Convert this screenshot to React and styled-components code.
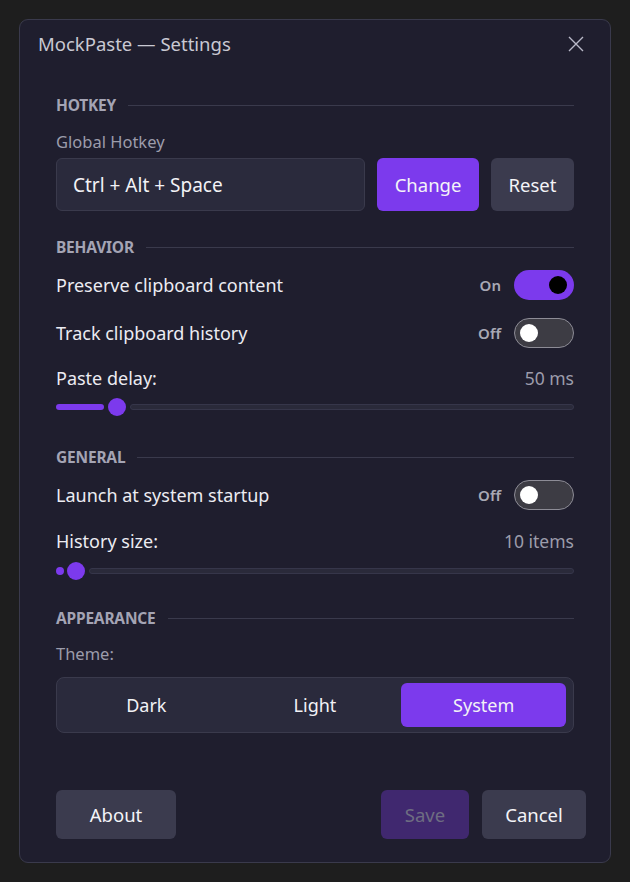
import React, { useState } from "react";
import styled, { createGlobalStyle } from "styled-components";

const Global = createGlobalStyle`
  html, body { margin: 0; padding: 0; background: #1e1e1e; }
  body { font-family: "Noto Sans", "Open Sans", sans-serif; color: #ececf2; }
  * { box-sizing: border-box; }
`;

const accent = "#7c3aed";

const Page = styled.div`
  width: 630px;
  height: 882px;
  padding: 19px;
`;

const Dialog = styled.div`
  height: 844px;
  background: #1f1e2e;
  border: 1px solid #3a3a4c;
  border-radius: 9px;
  display: flex;
  flex-direction: column;
`;

const TitleBar = styled.div`
  height: 47px;
  display: flex;
  align-items: center;
  justify-content: space-between;
  padding: 0 24px 0 18px;
`;

const Title = styled.div`
  font-size: 18.5px;
  color: #c9c9d3;
`;

const CloseButton = styled.button`
  width: 20px;
  height: 20px;
  padding: 0;
  border: 0;
  background: transparent;
  display: grid;
  place-items: center;
  cursor: pointer;
`;

const Body = styled.div`
  padding: 28px 36px 0 36px;
  display: flex;
  flex-direction: column;
`;

const SectionHeader = styled.div`
  display: flex;
  align-items: center;
  gap: 12px;
  height: 20px;
  margin-top: ${(p) => p.$mt || 0}px;
  font-size: 15.5px;
  font-weight: 700;
  letter-spacing: -0.2px;
  color: #a4a4b4;
  &::after {
    content: "";
    flex: 1;
    height: 1px;
    background: #3a3a4c;
  }
`;

const Caption = styled.div`
  height: 22px;
  line-height: 22px;
  margin-top: ${(p) => p.$mt || 0}px;
  font-size: 16.5px;
  color: #9c9cab;
`;

const HotkeyRow = styled.div`
  display: flex;
  gap: 12px;
  height: 53px;
  margin-top: 5px;
`;

const HotkeyField = styled.div`
  flex: 1;
  display: flex;
  align-items: center;
  padding: 0 16px;
  background: #2a2a3c;
  border: 1px solid #3a3a4c;
  border-radius: 6px;
  font-size: 19px;
  color: #f2f2f6;
`;

const Button = styled.button`
  height: ${(p) => p.$h || 53}px;
  padding: 0;
  width: ${(p) => p.$w}px;
  border: 0;
  border-radius: 6px;
  font-family: inherit;
  font-size: 18.5px;
  cursor: pointer;
  background: ${(p) =>
    p.$variant === "primary" ? accent : p.$variant === "disabled" ? "#40286f" : "#3b3b4e"};
  color: ${(p) => (p.$variant === "disabled" ? "#6e6d82" : "#f4f4f8")};
`;

const ToggleRow = styled.div`
  display: flex;
  align-items: center;
  justify-content: space-between;
  height: 32px;
  margin-top: ${(p) => p.$mt || 0}px;
`;

const RowLabel = styled.div`
  font-size: 18px;
  color: #ececf2;
`;

const ToggleGroup = styled.div`
  display: flex;
  align-items: center;
  gap: 13px;
`;

const ToggleState = styled.span`
  font-size: 15px;
  font-weight: 600;
  color: #a8a8b4;
`;

const Track = styled.button`
  position: relative;
  width: 60px;
  height: 30px;
  padding: 0;
  border-radius: 15px;
  cursor: pointer;
  background: ${(p) => (p.$on ? accent : "#3d3c44")};
  border: ${(p) => (p.$on ? "none" : "1.5px solid #8d8c96")};
`;

const Knob = styled.span`
  position: absolute;
  top: 50%;
  width: 18px;
  height: 18px;
  margin-top: -9px;
  border-radius: 50%;
  background: ${(p) => (p.$on ? "#000" : "#fff")};
  ${(p) => (p.$on ? "right: 7px;" : "left: 5px;")}
`;

const ValueRow = styled.div`
  display: flex;
  justify-content: space-between;
  align-items: center;
  height: 22px;
  margin-top: ${(p) => p.$mt || 0}px;
`;

const ValueText = styled.span`
  font-size: 17.5px;
  color: #9c9cab;
`;

const SliderBox = styled.div`
  display: flex;
  align-items: center;
  height: 18px;
  margin-top: ${(p) => p.$mt || 0}px;
`;

const SliderFill = styled.div`
  height: ${(p) => (p.$dot ? 8 : 6)}px;
  border-radius: 4px;
  background: ${accent};
  flex: none;
`;

const SliderThumb = styled.div`
  width: 18px;
  height: 18px;
  border-radius: 50%;
  background: ${accent};
  margin: 0 4px 0 ${(p) => (p.$tight ? 3 : 4)}px;
  flex: none;
`;

const SliderRest = styled.div`
  flex: 1;
  height: 6px;
  border-radius: 3px;
  background: #2a2a3a;
  border: 1px solid #36364a;
`;

const Segmented = styled.div`
  display: grid;
  grid-template-columns: repeat(3, 1fr);
  gap: 4px;
  height: 56px;
  margin-top: 12px;
  padding: 5px 7px;
  background: #2a2a3c;
  border: 1px solid #3a3a4c;
  border-radius: 8px;
`;

const Segment = styled.button`
  border: 0;
  border-radius: 6px;
  font-family: inherit;
  font-size: 18px;
  color: #f2f2f6;
  cursor: pointer;
  background: ${(p) => (p.$active ? accent : "transparent")};
`;

const Footer = styled.div`
  margin-top: auto;
  padding: 0 24px 23px 36px;
  display: flex;
  align-items: center;
`;

const Spacer = styled.div`
  flex: 1;
`;

const FooterGap = styled.div`
  width: 13px;
`;

function Toggle({ on, onChange }) {
  return (
    <ToggleGroup>
      <ToggleState>{on ? "On" : "Off"}</ToggleState>
      <Track $on={on} onClick={() => onChange(!on)} aria-pressed={on}>
        <Knob $on={on} />
      </Track>
    </ToggleGroup>
  );
}

function Slider({ fill, dot, mt }) {
  return (
    <SliderBox $mt={mt}>
      <SliderFill $dot={dot} style={{ width: fill }} />
      <SliderThumb $tight={dot} />
      <SliderRest />
    </SliderBox>
  );
}

export default function App() {
  const [preserve, setPreserve] = useState(true);
  const [track, setTrack] = useState(false);
  const [launch, setLaunch] = useState(false);
  const [theme, setTheme] = useState("System");

  return (
    <Page>
      <Global />
      <Dialog>
        <TitleBar>
          <Title>MockPaste — Settings</Title>
          <CloseButton aria-label="Close">
            <svg width="16" height="16" viewBox="0 0 16 16">
              <path d="M1 1L15 15M15 1L1 15" stroke="#b9b9c8" strokeWidth="1.4" />
            </svg>
          </CloseButton>
        </TitleBar>

        <Body>
          <SectionHeader>HOTKEY</SectionHeader>
          <Caption $mt={16}>Global Hotkey</Caption>
          <HotkeyRow>
            <HotkeyField>Ctrl + Alt + Space</HotkeyField>
            <Button $variant="primary" $w={102}>Change</Button>
            <Button $w={83}>Reset</Button>
          </HotkeyRow>

          <SectionHeader $mt={26}>BEHAVIOR</SectionHeader>
          <ToggleRow $mt={12}>
            <RowLabel>Preserve clipboard content</RowLabel>
            <Toggle on={preserve} onChange={setPreserve} />
          </ToggleRow>
          <ToggleRow $mt={16}>
            <RowLabel>Track clipboard history</RowLabel>
            <Toggle on={track} onChange={setTrack} />
          </ToggleRow>
          <ValueRow $mt={18}>
            <RowLabel>Paste delay:</RowLabel>
            <ValueText>50 ms</ValueText>
          </ValueRow>
          <Slider fill={48} mt={9} />

          <SectionHeader $mt={31}>GENERAL</SectionHeader>
          <ToggleRow $mt={12}>
            <RowLabel>Launch at system startup</RowLabel>
            <Toggle on={launch} onChange={setLaunch} />
          </ToggleRow>
          <ValueRow $mt={19}>
            <RowLabel>History size:</RowLabel>
            <ValueText>10 items</ValueText>
          </ValueRow>
          <Slider fill={8} dot mt={10} />

          <SectionHeader $mt={28}>APPEARANCE</SectionHeader>
          <Caption $mt={15}>Theme:</Caption>
          <Segmented>
            {["Dark", "Light", "System"].map((t) => (
              <Segment key={t} $active={theme === t} onClick={() => setTheme(t)}>
                {t}
              </Segment>
            ))}
          </Segmented>
        </Body>

        <Footer>
          <Button $w={120} $h={49}>About</Button>
          <Spacer />
          <Button $variant="disabled" $w={88} $h={49}>Save</Button>
          <FooterGap />
          <Button $w={104} $h={49}>Cancel</Button>
        </Footer>
      </Dialog>
    </Page>
  );
}
